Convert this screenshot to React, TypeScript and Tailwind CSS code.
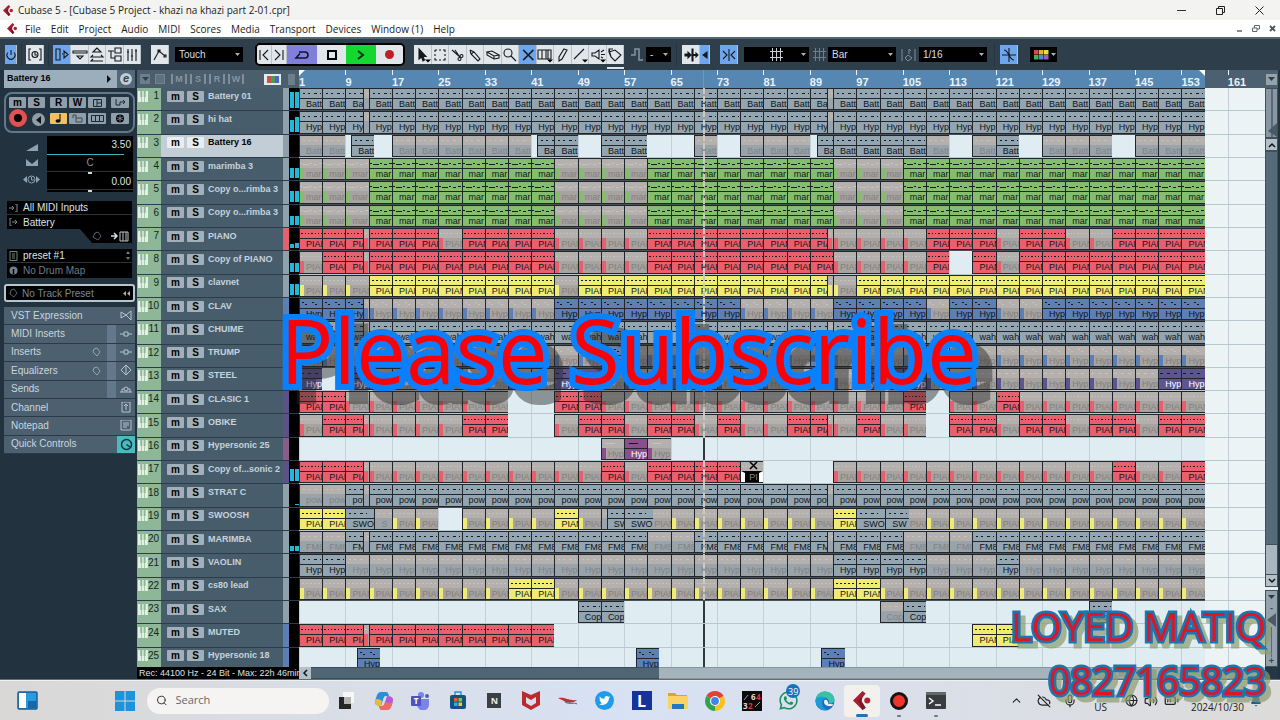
import type { ReactNode } from 'react';
import { ChevronUp, CloudOff, Mic, Volume2, BatteryMedium, Bell, Search, Globe } from 'lucide-react';
import { FaTwitter, FaWhatsapp } from 'react-icons/fa';

/* ---------- data ---------- */

type Tone = 'slate' | 'green' | 'red' | 'yellow' | 'blue' | 'violet' | 'plum';

interface Clip {
  start: number;
  len: number;
  on: boolean;
  label?: string;
  tone?: Tone;
  picked?: boolean;
}

interface Track {
  name: string;
  tone: Tone;
  label: string;
  /* one letter for each 4-bar block: a = playing, m = muted, s = split, '.' = empty */
  pattern: string;
  strip: string;
  meter: [number, number];
  extra?: Clip[];
}

const CELLS = 41.6;
const PLAYHEAD = 17.4;
const S = 'bg-[#8fa0ad]';
const B = 'bg-[#5c7fb5]';
const V = 'bg-[#5d5288]';

const tracks: Track[] = [
  { name: 'Battery 01', tone: 'slate', label: 'Batt', pattern: 'aasaaaaaaaaaaaaaaaaaaasaaaaaaaaaaaaaaaa', strip: S, meter: [16, 16] },
  { name: 'hi hat', tone: 'slate', label: 'Hyp', pattern: 'aasaaaaaaaaaaaaaaaaaaasaaaaaaaaaaaaaaaa', strip: S, meter: [12, 15] },
  {
    name: 'Battery 16', tone: 'slate', label: 'Batt', pattern: 'mm..mmmmmm.a.aa..m.mmm.aaaam.ma.mmm.mmm', strip: S, meter: [0, 0],
    extra: [
      { start: 2.25, len: 1, on: true },
      { start: 10.25, len: 0.75, on: true },
      { start: 22.3, len: 0.7, on: true },
    ],
  },
  { name: 'marimba 3', tone: 'green', label: 'mar', pattern: 'mmmaaaaaaaammmmaaaaaaaammmaaaaaaaaaaaaa', strip: S, meter: [10, 10] },
  { name: 'Copy o...rimba 3', tone: 'green', label: 'mar', pattern: 'mmmaaaaaaaammmmaaaaaaaammmaaaaaaaaaaaaa', strip: S, meter: [11, 11] },
  { name: 'Copy o...rimba 3', tone: 'green', label: 'mar', pattern: 'mmmaaaaaaaammmmaaaaaaaammmaaaaaaaaaaaaa', strip: S, meter: [9, 9] },
  { name: 'PIANO', tone: 'red', label: 'PIAN', pattern: 'aasaaamaaaammmmaaaaaaasmmmmaaamaammaaaa', strip: 'bg-[#e8606d]', meter: [4, 5] },
  { name: 'Copy of PIANO', tone: 'red', label: 'PIAN', pattern: 'masaaaaaaaammmmaaaaaaaammmma.amaaaaaaaa', strip: S, meter: [9, 9] },
  { name: 'clavnet', tone: 'yellow', label: 'PIAN', pattern: 'mmmaaaaaaaamaaaaaaaaaasmaaaaaaaaaaaaaaa', strip: S, meter: [11, 11] },
  { name: 'CLAV', tone: 'blue', label: 'Hyp', pattern: 'aasmmmmmmmmaaaaaaaammmmaaaamaammaaaaaaa', strip: B, meter: [0, 0] },
  { name: 'CHUIME', tone: 'slate', label: 'wah', pattern: 'aasaaaaaaaaaaaaaaaaaaasaaaaaaaaaaaaaaaa', strip: B, meter: [0, 0] },
  { name: 'TRUMP', tone: 'blue', label: 'Hyp', pattern: 'mmmmmmmmmmmmmammmmmmmmmmmmmmmmmmmmmmmmm', strip: B, meter: [0, 0] },
  { name: 'STEEL', tone: 'violet', label: 'Hyp', pattern: 'a.ammmmmmmmaammmmmmmmmmmaaammmmmmmmmmaa', strip: V, meter: [0, 0] },
  { name: 'CLASIC 1', tone: 'red', label: 'PIAN', pattern: 'aammmmmmm..aammmmmmmmmmmmma.mmammmmmmmm', strip: V, meter: [0, 0] },
  { name: 'OBIKE', tone: 'red', label: 'PIAN', pattern: 'masmmmmaa..maamaamammasmamm.aamaamaamaa', strip: V, meter: [0, 0] },
  { name: 'Hypersonic 25', tone: 'plum', label: 'Hyp', pattern: '.............mam.......................', strip: 'bg-[#895c8c]', meter: [0, 0] },
  {
    name: 'Copy of...sonic 2', tone: 'red', label: 'PIAN', pattern: 'aasmmmmmmmmmmamaaaa....mmmmmmmmmmmmamma', strip: V, meter: [12, 12],
    extra: [{ start: 19, len: 1, on: false, picked: true }],
  },
  { name: 'STRAT C', tone: 'slate', label: 'pow', pattern: 'mmsaaaaaaaaaaaaaaaaaaasaaaaaaaaaaaaaaaa', strip: S, meter: [0, 1] },
  {
    name: 'SWOOSH', tone: 'yellow', label: 'PIAN', pattern: 'aa..mm.mmmmam..mmmmmmmma..mmmmmmmmmmmmm', strip: S, meter: [0, 0],
    extra: [
      { start: 2, len: 1.25, on: true, label: 'SWO', tone: 'slate' },
      { start: 3.25, len: 0.75, on: false, label: 'S', tone: 'slate' },
      { start: 13, len: 0.25, on: false, label: '', tone: 'slate' },
      { start: 13.25, len: 0.75, on: true, label: 'SW', tone: 'slate' },
      { start: 14, len: 1.25, on: true, label: 'SWO', tone: 'slate' },
      { start: 24, len: 1.25, on: true, label: 'SWO', tone: 'slate' },
      { start: 25.25, len: 1, on: true, label: 'SW', tone: 'slate' },
    ],
  },
  { name: 'MARIMBA', tone: 'slate', label: 'FM8', pattern: 'mmsaaaaaaaaaaaammaaaaasaaammmaaaaaaaaaa', strip: S, meter: [5, 5] },
  { name: 'VAOLIN', tone: 'slate', label: 'Hyp', pattern: 'aammmmmmmmmmmmmmmmmmmmmaaaammmammmmmmmm', strip: S, meter: [0, 0] },
  { name: 'cs80 lead', tone: 'yellow', label: 'PIAN', pattern: 'mmmmmmmmmaammmmmmmmmmmmaammmmmmmmmmmmmm', strip: S, meter: [0, 0] },
  { name: 'SAX', tone: 'slate', label: 'Cop', pattern: '............aa...........ma.......a....', strip: S, meter: [0, 0] },
  {
    name: 'MUTED', tone: 'red', label: 'PIAN', pattern: 'aasaaaaaaaa............................', strip: B, meter: [0, 0],
    extra: [
      { start: 29, len: 1, on: true, tone: 'yellow' },
      { start: 30, len: 1, on: true, tone: 'yellow' },
    ],
  },
  {
    name: 'Hypersonic 18', tone: 'blue', label: 'Hyp', pattern: '', strip: B, meter: [0, 0],
    extra: [
      { start: 2.5, len: 1, on: true },
      { start: 14.5, len: 1, on: true },
      { start: 22.5, len: 1, on: true },
    ],
  },
];

const fills: Record<Tone, string> = {
  slate: 'bg-[#93a5b1]',
  green: 'bg-[#84bd6e]',
  red: 'bg-[#e8606d]',
  yellow: 'bg-[#f0ec72]',
  blue: 'bg-[#5c7fb5]',
  violet: 'bg-[#5d5590]',
  plum: 'bg-[#8c4f8e]',
};

const noteLines: Record<Tone, string> = {
  slate: 'M3 4.5H5M8 4.5H10M14 4.5H17M20 4.5H21',
  green: 'M0 4.500H2M3 5.500H9M10 4.500H12M14 5.500H17M19 4.500H22',
  red: 'M1 4.500H3M5 4.500H6M8 4.500H9M11 4.500H13M15 4.500H16M18 4.500H19M21 4.500H22',
  yellow: 'M2 4.500H4M6 4.500H8M10 4.500H12M14 4.500H16M18 4.500H20',
  blue: 'M2 3.500H4M5 5.500H7M12 3.500H14M15 5.500H17',
  violet: 'M1 4.500H4M8 4.500H11M15 4.500H18',
  plum: 'M4 4.500H13',
};

function buildClips(t: Track): Clip[] {
  const out: Clip[] = [];
  t.pattern.split('').forEach((c, i) => {
    if (c === 'a') out.push({ start: i, len: 1, on: true });
    if (c === 'm') out.push({ start: i, len: 1, on: false });
    if (c === 's') {
      out.push({ start: i, len: 0.75, on: true });
      out.push({ start: i + 0.75, len: 0.25, on: false, label: '' });
    }
  });
  return out.concat(t.extra ?? []);
}

const pct = (v: number) => `${(v / CELLS) * 100}%`;

/* ---------- timeline ---------- */

function ClipBox({ clip, track }: { clip: Clip; track: Track }) {
  const tone = clip.tone ?? track.tone;
  const label = clip.label ?? track.label;
  const light = tone === 'violet' || tone === 'plum';
  return (
    <div
      className="absolute top-0 bottom-0 flex flex-col overflow-hidden border-y border-l border-[#20262b]"
      style={{ left: pct(clip.start), width: pct(clip.len) }}
    >
      <div className={`h-[9px] shrink-0 overflow-hidden ${clip.on ? fills[tone] : 'bg-[#b3b0ae]'}`}>
        <svg width="23" height="9" className="block">
          <path d={noteLines[tone]} stroke={clip.on ? '#15191c' : '#c6c4c2'} />
        </svg>
      </div>
      {clip.on ? (
        <div className={`min-h-0 flex-1 overflow-hidden border-t border-[#20262b] pl-[6px] text-[9px] leading-[11px] whitespace-nowrap ${fills[tone]} ${light ? 'text-white' : 'text-[#101418]'}`}>
          {label}
        </div>
      ) : clip.picked ? (
        <div className="min-h-0 flex-1 overflow-hidden border-x-4 border-t-2 border-x-white border-t-black bg-black pl-1 text-[9px] leading-[9px] text-[#8a8a8a]">PI</div>
      ) : (
        <div className={`flex min-h-0 flex-1 overflow-hidden text-[9px] leading-[12px] whitespace-nowrap ${tone === 'slate' ? 'bg-[#9aa3a9] text-[#7f8487]' : fills[tone]}`}>
          <span className={`ml-[4px] min-w-0 flex-1 overflow-hidden pl-0.5 ${tone === 'slate' ? '' : 'bg-[#a6a3a1] text-[#84807d]'}`}>{label}</span>
        </div>
      )}
    </div>
  );
}

function Ruler() {
  const marks = Array.from({ length: 21 }, (_, i) => i);
  return (
    <div className="relative h-[18px] shrink-0 overflow-hidden bg-[#4d606f]">
      <div className="absolute inset-y-0 left-0 bg-[#5686b2]" style={{ width: pct(39) }} />
      <svg className="absolute top-0 left-0" width="6" height="6"><path d="M0 0H6L0 6z" fill="#fff" /></svg>
      <div className="absolute top-0" style={{ left: pct(38.75) }}>
        <svg width="6" height="6" className="block"><path d="M0 0H6V6z" fill="#fff" /></svg>
      </div>
      {marks.map((i) => (
        <div key={i} className="absolute inset-y-0" style={{ left: pct(i * 2) }}>
          <div className="h-[5px] w-px bg-white/90" />
          <div className="text-[11px] leading-[14px] font-bold text-[#eaf3fa]">{i * 8 + 1}</div>
        </div>
      ))}
      <div className="absolute inset-y-0 w-px bg-[#9a8f7c]" style={{ left: pct(PLAYHEAD) }} />
    </div>
  );
}

function Timeline() {
  const lines = Array.from({ length: 21 }, (_, i) => i);
  return (
    <section aria-label="Arrangement" className="flex min-w-0 flex-1 flex-col">
      <Ruler />
      <div className="relative min-h-0 flex-1 overflow-hidden bg-[#ecf3f5]">
        <div className="absolute inset-y-0 left-0 bg-[#dfecf2]" style={{ width: pct(39) }} />
        {lines.map((i) => (
          <div key={i} className="absolute inset-y-0 w-px bg-[#c3d0d8]" style={{ left: pct(i * 2) }} />
        ))}
        <div className="absolute inset-y-0 w-0.5 bg-[#30383e]" style={{ left: pct(PLAYHEAD) }} />
        <div className="grid h-[583px] grid-rows-[repeat(25,minmax(0,1fr))]">
          {tracks.map((t, i) => {
            const crossed = /[ams]/.test(t.pattern.charAt(Math.floor(PLAYHEAD)));
            return (
              <div key={i} className="relative border-b border-[#b9c7cf]">
                {/^[^.]+$/.test(t.pattern) && (
                  <div className="absolute top-0 -bottom-px left-0 bg-[#4a5257]" style={{ width: pct(39) }} />
                )}
                {buildClips(t).map((c, k) => (
                  <ClipBox key={k} clip={c} track={t} />
                ))}
                {crossed && (
                  <div className="absolute inset-y-0 w-0 border-l-2 border-dashed border-[#cdc8c0]" style={{ left: pct(PLAYHEAD) }} />
                )}
              </div>
            );
          })}
        </div>
        <svg className="absolute top-[373px]" style={{ left: pct(19.4) }} width="10" height="9" viewBox="0 0 10 9">
          <path d="M1 1L8 8M8 1L1 8" stroke="#000" strokeWidth="1.6" />
        </svg>
      </div>
      <div className="flex h-3 shrink-0 bg-[#a5b3bc]">
        <button aria-label="Scroll left" className="flex w-3 items-center justify-center bg-[#b4c0c8]">
          <svg width="6" height="8"><path d="M5 1L2 4L5 7" stroke="#111" strokeWidth="1.5" fill="none" /></svg>
        </button>
        <div className="w-[36%] border-y border-[#3c4d59] bg-[#4f6573]" />
        <div className="flex-1 border-y border-[#8795a0]" />
        <button aria-label="Scroll right" className="flex w-3 items-center justify-center bg-[#b4c0c8]">
          <svg width="6" height="8"><path d="M1 1L4 4L1 7" stroke="#111" strokeWidth="1.5" fill="none" /></svg>
        </button>
      </div>
    </section>
  );
}

function RightRail() {
  return (
    <div className="flex w-[13px] shrink-0 flex-col bg-[#a9b6bf]">
      <div className="flex h-[18px] shrink-0 items-center justify-center bg-[#4d606f]">
        <button aria-label="Ruler options" className="flex size-[11px] items-center justify-center bg-[#94a2ac]">
          <svg width="7" height="5"><path d="M0 0H7L3.500 4z" fill="#2e3c47" /></svg>
        </button>
      </div>
      <div className="relative flex h-[50px] shrink-0 justify-center border border-[#3f4f5b] bg-[#8797a3]">
        <div className="w-0.5 bg-[#5a6975]" />
        <svg className="absolute bottom-0 left-0.5" width="9" height="14"><path d="M9 0V14L0 8z" fill="#4d5a64" /></svg>
      </div>
      <button aria-label="Scroll up" className="flex h-[13px] shrink-0 items-center justify-center border border-[#3f4f5b] bg-[#b4c0c8]">
        <svg width="8" height="6"><path d="M1 5L4 2L7 5" stroke="#111" strokeWidth="1.5" fill="none" /></svg>
      </button>
      <div className="flex-1 border border-[#3f4f5b] bg-[#566b7a]" />
      <div className="h-[29px] shrink-0 border-x border-[#3f4f5b]" />
      <button aria-label="Scroll down" className="flex h-[13px] shrink-0 items-center justify-center border border-[#3f4f5b] bg-[#b4c0c8]">
        <svg width="8" height="6"><path d="M1 1L4 4L7 1" stroke="#111" strokeWidth="1.5" fill="none" /></svg>
      </button>
      <div className="h-[3px] shrink-0 bg-[#e6edf0]" />
      <div className="flex h-[77px] shrink-0 flex-col items-center border border-[#3f4f5b] bg-[#94a3ae] text-[9px] leading-[9px] font-bold text-[#35434e]">
        <svg className="mt-1" width="7" height="5"><path d="M0 0H7L3.500 4z" fill="#2e3c47" /></svg>
        <span className="mt-1">-</span>
        <svg width="9" height="14"><path d="M9 0V14L0 7z" fill="#4d5a64" /></svg>
        <div className="w-px flex-1 bg-[#5a6975]" />
        <span>+</span>
      </div>
      <div className="h-3 shrink-0 bg-[#263744]" />
    </div>
  );
}

/* ---------- track list ---------- */

function Keys() {
  return (
    <svg width="10" height="11" viewBox="0 0 10 11" aria-hidden="true">
      <path d="M0 0H3V11H0zM3.700 0H6.300V11H3.700zM7 0H10V11H7z" fill="#e2f1e4" />
      <path d="M2.300 0H4.300V6H2.300zM5.700 0H7.700V6H5.700z" fill="#8db796" />
    </svg>
  );
}

function MuteSolo({ active }: { active?: boolean }) {
  const cls = `h-[11px] w-[17px] rounded-[1px] text-[10px] leading-[11px] font-black text-black ${active ? 'bg-[#e9edf0]' : 'bg-[#a3b0ba]'}`;
  return (
    <>
      <button aria-label="Mute" className={cls}>m</button>
      <button aria-label="Solo" className={cls}>S</button>
    </>
  );
}

function TrackList() {
  return (
    <section aria-label="Tracks" className="flex w-[162px] shrink-0 flex-col bg-black">
      <div className="flex h-[18px] shrink-0 items-center gap-[3px] bg-[#4b5e6c] pr-1 pl-[3px]">
        <button aria-label="Track menu" className="flex h-[10px] w-[10px] items-center justify-center bg-[#6c7e8b]">
          <svg width="7" height="4"><path d="M0 0H7L3.500 4z" fill="#2f3f4b" /></svg>
        </button>
        <button aria-label="Add track" className="ml-0.5 size-[10px] border border-[#74858f] bg-[#5f717e]" />
        <div className="ml-[3px] flex gap-[3px]">
          {['M', 'S', 'R', 'W'].map((k) => (
            <button key={k} aria-label={`All ${k}`} className="h-[10px] w-4 border-x-2 border-[#7e8f9b] text-[9px] leading-[10px] font-bold text-[#8496a2]">{k}</button>
          ))}
        </div>
        <button aria-label="Track colours" className="ml-auto flex h-[11px] w-[17px] items-center justify-center bg-[#e4e9ec]">
          <i className="h-[7px] w-1 bg-[#ca5248]" /><i className="h-[7px] w-1 bg-[#4a9c5e]" /><i className="h-[7px] w-1 bg-[#4a67c8]" />
        </button>
        <button aria-label="Divide list" className="ml-1 h-[11px] w-[7px] bg-[#6c7e8b]" />
      </div>
      <div className="min-h-0 flex-1 overflow-hidden">
        <ul className="grid h-[583px] grid-rows-[repeat(25,minmax(0,1fr))]">
          {tracks.map((t, i) => {
            const active = i === 2;
            return (
              <li key={i} className="flex min-h-0 border-b border-[#2c3d49]">
                <div className="flex w-6 items-center justify-between bg-[#8db796] pr-0.5 pb-1.5 pl-px text-[10px] leading-none text-[#15251a]">
                  <Keys />
                  {i + 1}
                </div>
                <div className={`flex min-w-0 flex-1 items-center gap-[3px] pb-1.5 pl-1.5 ${active ? 'bg-[#c3cdd5]' : 'bg-[#485d6c]'}`}>
                  <MuteSolo active={active} />
                  <span className={`ml-px text-[9px] leading-none font-bold whitespace-nowrap ${active ? 'text-black' : 'text-[#c6d2db]'}`}>{t.name}</span>
                </div>
                <div className={`w-[6px] ${t.strip}`} />
                <div className="flex w-[10px] items-end gap-px bg-black pb-0.5 pl-px">
                  <div className="w-1 bg-[#1fb9dc]" style={{ height: t.meter[0] }} />
                  <div className="w-1 bg-[#1fb9dc]" style={{ height: t.meter[1] }} />
                </div>
              </li>
            );
          })}
        </ul>
      </div>
      <div className="h-3 shrink-0 overflow-hidden bg-black pl-0.5 text-[9px] leading-3 whitespace-nowrap text-[#dde3e8]">
        Rec: 44100 Hz - 24 Bit - Max: 22h 46min
      </div>
    </section>
  );
}

/* ---------- inspector ---------- */

function SmallKey({ children, label, gold, wide }: { children: ReactNode; label: string; gold?: boolean; wide?: boolean }) {
  return (
    <button
      aria-label={label}
      className={`flex h-[11px] items-center justify-center rounded-[1px] text-[10px] leading-none font-black text-black ${wide ? 'w-[18px]' : 'w-[17px]'} ${gold ? 'bg-[#f2c063]' : 'bg-[#8e9eaa]'}`}
    >
      {children}
    </button>
  );
}

function Inspector() {
  const sections: [string, string, boolean][] = [
    ['VST Expression', 'M1 2V8L6 5zM11 1V10L6 5z', false],
    ['MIDI Inserts', 'M0 5H4M8 5H12M4 3H8V7H4z', false],
    ['Inserts', 'M0 5H4M8 5H12M4 3H8V7H4z', true],
    ['Equalizers', 'M1 5L6 0L11 5L6 10zM6 0V10', true],
    ['Sends', 'M0 8H12M2 8V5H4M10 8V5H8M4 5A2 2 0 1 0 8 5A2 2 0 1 0 4 5', false],
    ['Channel', 'M2 0H10V10H2zM6 8V2M4 4L6 2L8 4', false],
    ['Notepad', 'M1 0H11V10H1zM3 3H9M3 5H9M3 7H7', false],
    ['Quick Controls', '', false],
  ];
  return (
    <aside aria-label="Inspector" className="flex w-[133px] shrink-0 flex-col bg-[#22333f] pr-0.5 text-[10px] text-[#dbe4ea]">
      <div className="flex h-[18px] items-center bg-[#9caebb] text-black">
        <span className="flex-1 pl-[3px] text-[9px] font-bold">Battery 16</span>
        <svg width="4" height="8"><path d="M0 0L4 4L0 8z" fill="#111" /></svg>
        <button aria-label="Edit channel" className="ml-[6px] flex h-[18px] w-[18px] items-center justify-center bg-[#536878]">
          <span className="size-3 rounded-full bg-[#c1ccd4] text-center text-[11px] leading-[10px] font-bold text-[#34434f] italic">e</span>
        </button>
      </div>

      <div className="mt-[4px] rounded-lg border-2 border-[#61788a] px-[3px] pt-[3px] pb-1">
        <div className="flex gap-0.5">
          <SmallKey label="Mute">m</SmallKey>
          <SmallKey label="Solo">S</SmallKey>
          <span className="w-px" />
          <SmallKey label="Read">R</SmallKey>
          <SmallKey label="Write">W</SmallKey>
          <SmallKey label="Editor" wide><svg width="9" height="8"><path d="M.5 .5H8.500V7.500H.5zM4 .5V7.500M4 4H8" stroke="#1c2830" fill="none" /></svg></SmallKey>
          <span className="w-px" />
          <SmallKey label="Input transformer" wide><svg width="11" height="8"><path d="M1 0V6H5V3H10M8 1L10 3L8 5" stroke="#1c2830" fill="none" /></svg></SmallKey>
        </div>
        <div className="mt-[5px] flex gap-0.5">
          <span className="flex w-[17px] items-start">
            <button aria-label="Record enable" className="-mt-1 size-[18px] shrink-0 rounded-full border-[5px] border-[#e2504f] bg-black" />
          </span>
          <button aria-label="Monitor" className="ml-1 flex size-[13px] items-center justify-center rounded-full bg-[#8e9eaa]">
            <svg width="6" height="8"><path d="M5 0V8L0 4z" fill="#111" /></svg>
          </button>
          <span className="w-px" />
          <SmallKey label="Timebase" gold><svg width="8" height="9"><ellipse cx="3" cy="7" rx="2.500" ry="1.700" /><path d="M5 7V0" stroke="#000" /></svg></SmallKey>
          <SmallKey label="Lock"><svg width="11" height="9"><path d="M1 4V1H4V4H10V8H4V4" stroke="#3d4b55" fill="none" /></svg></SmallKey>
          <SmallKey label="Lanes" wide><svg width="13" height="7"><path d="M.5 .5H12.500V6.500H.5zM4.500 .5V6.500M8.500 .5V6.500" stroke="#1c2830" fill="none" /></svg></SmallKey>
          <span className="w-px" />
          <SmallKey label="Freeze" wide><svg width="10" height="9" viewBox="0 0 10 9"><circle cx="5" cy="4.500" r="4" /><path d="M5 1V8M2 3L8 6M8 3L2 6" stroke="#8e9eaa" strokeWidth=".8" /></svg></SmallKey>
        </div>
      </div>

      <div className="mt-[3px] flex">
        <div className="flex w-[43px] flex-col items-center justify-around py-1 pl-3">
          <svg width="12" height="7"><path d="M0 7L12 0V7z" fill="#8fa1b0" /></svg>
          <svg width="12" height="7"><path d="M0 0L6 5L12 0V7H0z" fill="#8fa1b0" /></svg>
          <svg width="17" height="9"><path d="M0 4.500L4 1V8zM17 4.500L13 1V8z" fill="#8fa1b0" /><circle cx="8.500" cy="4.500" r="3.500" stroke="#8fa1b0" fill="none" /><path d="M8.500 2V5H11" stroke="#8fa1b0" fill="none" /></svg>
        </div>
        <div className="mr-0.5 flex-1 bg-black text-right text-[10px]">
          <div className="h-[18px] pt-px pr-0.5 leading-4">3.50</div>
          <div className="h-px w-[90%] bg-[#3fb5b9]" />
          <div className="h-4 text-center leading-4 text-[#8b969e]">C</div>
          <div className="flex justify-center border-t border-[#333]"><i className="h-0.5 w-1 bg-[#c8dce6]" /></div>
          <div className="h-[15px] pr-0.5 leading-[15px]">0.00</div>
          <div className="flex justify-center border-t border-[#333]"><i className="h-0.5 w-1 bg-[#c8dce6]" /></div>
        </div>
      </div>

      <div className="mx-[3px] mt-[9px] bg-black">
        <div className="flex h-[14px] items-center gap-[5px] border-b border-[#2c3338] pl-0.5">
          <svg width="9" height="8"><path d="M0 4H5M3 2L5 4L3 6M6 0H8V8H6" stroke="#7d8a94" fill="none" /></svg>All MIDI Inputs
        </div>
        <div className="flex h-[14px] items-center gap-[5px] pl-0.5">
          <svg width="9" height="8"><path d="M3 0H1V8H3M3 4H8M6 2L8 4L6 6" stroke="#7d8a94" fill="none" /></svg>Battery
        </div>
      </div>
      <div className="mr-[3px] flex justify-end">
        <svg width="52" height="14"><path d="M0 0H52V14H12z" fill="#000" /><path d="M15 4L18 3L21 7L18 11L13 8z" stroke="#56626b" fill="none" /><path d="M31 7H36M34 4L37 7L34 10" stroke="#d5dde2" strokeWidth="1.500" fill="none" /><path d="M40 3H48V12H40zM43 3V12M46 3V12" stroke="#b9c4cc" fill="none" /></svg>
      </div>
      <div className="mx-[3px] mt-[6px] bg-black">
        <div className="flex h-[14px] items-center gap-[5px] border-b border-[#2c3338] pr-0.5 pl-0.5">
          <svg width="9" height="10"><path d="M1 .5H8V9.500H1zM3 3H6M3 5H6M3 7H6" stroke="#6e8577" fill="none" /></svg>
          <span className="flex-1">preset #1</span>
          <svg width="4" height="9"><path d="M0 3L2 0L4 3zM0 6L2 9L4 6z" fill="#6f7a82" /></svg>
        </div>
        <div className="flex h-[15px] items-center gap-[5px] pl-0.5 text-[#707c84]">
          <svg width="9" height="9"><circle cx="4.500" cy="4.500" r="4" fill="#71808a" /><path d="M4.500 3V8" stroke="#000" strokeWidth="1.500" /></svg>No Drum Map
        </div>
      </div>
      <div className="mt-[6px] flex h-[18px] items-center gap-1 rounded-[3px] border-2 border-[#b5c6d0] bg-black px-[3px] text-[#7b878f]">
        <svg width="9" height="10"><path d="M2 2L5 1L8 5L5 9L1 6z" stroke="#56626b" fill="none" /></svg>
        <span className="flex-1">No Track Preset</span>
        <svg width="7" height="5"><path d="M3 0V5L0 2.500zM7 0V5L4 2.500z" fill="#a5b0b8" /></svg>
      </div>

      <ul className="mt-[5px] grid h-[147px] grid-rows-[repeat(8,minmax(0,1fr))]">
        {sections.map(([name, d, bypass], i) => (
          <li key={name} className="flex items-stretch border-b border-[#2a3b47] bg-[#4c6070]">
            <button className="flex-1 pl-[7px] text-left leading-none text-[#c9d6df]">{name}</button>
            {bypass && (
              <svg className="mr-1.5 self-center" width="9" height="10"><path d="M2 2L5 1L8 5L5 9L1 5z" stroke="#8fa3b1" fill="none" /></svg>
            )}
            {i > 0 && i < 5 && <span className="mr-px w-[9px] bg-[#63788a]" />}
            <span className={`flex w-[18px] items-center justify-center ${i === 7 ? 'bg-[#4bb9bd]' : ''}`}>
              {i === 7 ? (
                <svg width="13" height="13"><circle cx="6.500" cy="6.500" r="5" stroke="#12333c" strokeWidth="1.500" fill="none" /><path d="M6.500 6.500L10 9" stroke="#12333c" strokeWidth="1.500" /></svg>
              ) : (
                <svg width="12" height="11"><path d={d} stroke="#b4c5d0" fill="none" /></svg>
              )}
            </span>
          </li>
        ))}
      </ul>
    </aside>
  );
}

/* ---------- toolbar ---------- */

function Tool({ d, label, tone, w, menu, fill }: { d: string; label: string; tone?: 'blue'; w?: string; menu?: boolean; fill?: boolean }) {
  return (
    <button aria-label={label} className={`flex h-[19px] items-center justify-center border-r border-[#b9c2c9] ${w ?? 'w-[17px]'} ${tone === 'blue' ? 'bg-[#6ea6ee]' : 'bg-[#e1e6ea]'}`}>
      <svg width="16" height="16" viewBox="0 0 16 16" className="shrink-0">
        <path d={d} stroke="#15191d" strokeWidth="1.100" fill={fill ? '#15191d' : 'none'} />
        {menu && <path d="M10 12.500H16L13 15.500z" fill="#000" />}
      </svg>
    </button>
  );
}

function Pick({ label, value, w }: { label: string; value: string; w: string }) {
  return (
    <div className={`relative flex h-[15px] items-center bg-black ${w}`}>
      <select aria-label={label} defaultValue={value} className="h-full w-full appearance-none bg-transparent pl-1 text-[10px] leading-none text-[#d9dfe4] outline-none">
        <option>{value}</option>
      </select>
      <svg className="pointer-events-none absolute right-[3px]" width="5" height="3"><path d="M0 0H5L2.500 3z" fill="#aab3ba" /></svg>
    </div>
  );
}

const Divider = () => <span className="h-[22px] w-px bg-[#253440]" />;

function GridMark({ tint }: { tint: string }) {
  return (
    <svg width="13" height="13"><path d="M0 3.500H13M0 9.500H13M2.500 0V13M6.500 0V13M10.500 0V13" stroke={tint} fill="none" /></svg>
  );
}

function Toolbar() {
  return (
    <div role="toolbar" aria-label="Project tools" className="flex h-[33px] shrink-0 items-center border-t-2 border-[#55646f] bg-[#2e3e4b] pl-[5px]">
      <Tool label="Activate project" tone="blue" w="w-[12px]" d="M8 3V8M5 5.500A4 4 0 1 0 11 5.500" />
      <span className="w-1" /><Divider /><span className="w-1" />
      <Tool label="Delay compensation" w="w-[18px]" d="M4 2H2V13H4M12 2H14V13H12M5 7.500A3 3 0 1 0 11 7.500A3 3 0 1 0 5 7.500M8 5V8H10" />
      <span className="w-1" /><Divider /><span className="w-1" />
      <div className="flex">
        <Tool label="Show inspector" tone="blue" w="w-[18px]" d="M2 2H6V13H2zM8 7H9M10 4V11L14 7.500z" />
        <Tool label="Show info line" w="w-[18px]" d="M1 4H15V6H1zM5 9H11L8 12z" />
        <Tool label="Show overview" w="w-[17px]" d="M8 1L4 5H12zM4 8L2 10H14L12 8M4 12L2 14H14" />
        <Tool label="Open pool" w="w-[18px]" d="M1 4H7M4 4V11H8M8 1H14V6H8zM8 9H14V14H8z" />
        <Tool label="Open mixer" w="w-[17px]" d="M4 2V14M8 2V14M12 2V14M3 5H5M7 9H9M11 4H13" />
      </div>
      <span className="w-[10px]" />
      <Tool label="Automation" w="w-[18px]" d="M2 13L7 4L13 9M6 3H8V5H6zM12 8H14V10H12z" />
      <span className="w-[6px]" />
      <Pick label="Automation mode" value="Touch" w="w-[68px]" />
      <div className="ml-3 flex items-center overflow-hidden rounded-[5px] border-2 border-black">
        <Tool label="To start" w="w-[15px]" d="M4 3V13M12 3L7 8L12 13" />
        <Tool label="To end" w="w-[15px]" d="M4 3L9 8L4 13M12 3V13" />
        <button aria-label="Cycle" className="flex h-[19px] w-[30px] items-center justify-center bg-[#8080dc]">
          <svg width="18" height="12"><path d="M6 3H12A3 3 0 0 1 12 9H3L7 4.500" stroke="#15152a" strokeWidth="1.600" fill="none" /></svg>
        </button>
        <button aria-label="Stop" className="flex h-[19px] w-[29px] items-center justify-center bg-[#e1e6ea]"><i className="size-[10px] border-2 border-black" /></button>
        <button aria-label="Play" className="flex h-[19px] w-[30px] items-center justify-center bg-[#13d82f]">
          <svg width="8" height="10"><path d="M1 1L6 5L1 9" stroke="#0a3510" strokeWidth="2" fill="none" /></svg>
        </button>
        <button aria-label="Record" className="flex h-[19px] w-[27px] items-center justify-center bg-[#e1e6ea]"><i className="size-[9px] rounded-full bg-[#ba2026]" /></button>
      </div>
      <div className="ml-[9px] flex">
        <Tool label="Select" w="w-[18px]" menu fill d="M4 2V12L6.500 10L8 14L9.500 13L8 9.500H11z" />
        <Tool label="Range" w="w-[17px]" d="M3 3H5M7 3H9M11 3H13V5M13 7V9M13 11V13H11M9 13H7M5 13H3V11M3 9V7M3 5V3" />
        <Tool label="Split" w="w-[18px]" d="M2 3L10 10M5 3L9 9M10 9A1.500 1.500 0 1 0 13 9A1.500 1.500 0 1 0 10 9M8 12A1.500 1.500 0 1 0 11 12A1.500 1.500 0 1 0 8 12" />
        <Tool label="Glue" w="w-[17px]" d="M3 3L4 7L11 14L13 12L7 5L3 3M4 7L7 5" />
        <Tool label="Erase" w="w-[18px]" d="M2 5L7 4L14 8L9 9zM2 5V8L9 12L14 11V8M9 9V12" />
        <Tool label="Zoom" w="w-[17px]" d="M2 6A4 4 0 1 0 10 6A4 4 0 1 0 2 6M9 9L14 14" />
        <Tool label="Mute" tone="blue" w="w-[18px]" d="M3 3L13 13M13 3L3 13M3.500 3L13.500 13M13.500 3L3.500 13" />
        <Tool label="Time warp" w="w-[17px]" menu d="M1 3H14V12H1zM5 3V12M9 3V12M11 3V12" />
        <Tool label="Draw" w="w-[18px]" d="M9 2L12 3L7 12L4 14V10z" />
        <Tool label="Line" w="w-[17px]" menu d="M2 12L12 2" />
        <Tool label="Play" w="w-[18px]" menu d="M2 6H5L9 3V12L5 9H2zM11 5L14 3M11 7.500H15M11 10L13 11" />
        <span className="relative flex">
          <Tool label="Colour" w="w-[17px]" d="M2 5L8 3L14 8L8 14L4 10zM2 2L4 10M2 5V2H6" />
          <i className="absolute -bottom-[5px] left-0 h-0.5 w-full bg-[#dfe5e9]" />
        </span>
      </div>
      <svg className="ml-[7px]" width="12" height="13"><path d="M0 7H4V1H8V12H12" stroke="#8795a0" strokeWidth="1.500" fill="none" /></svg>
      <span className="w-[3px]" />
      <Pick label="Curve" value="-" w="w-[25px]" />
      <span className="w-[5px]" /><Divider /><span className="w-[5px]" />
      <Tool label="Auto-scroll" w="w-[18px]" fill d="M2 7H5V5L8 8L5 11V9H2zM9 2H10V14H9zM11 7.500H13V6L15 8L13 10V8.500H11z" />
      <Tool label="Suspend auto-scroll" tone="blue" w="w-[10px]" fill d="M10 5V11L6 8z" />
      <span className="w-[10px]" />
      <Tool label="Snap" tone="blue" w="w-[18px]" d="M8 2V14M2 4L6 8L2 12M14 4L10 8L14 12" />
      <div className="relative ml-[6px] flex items-center justify-center">
        <Pick label="Snap type" value=" " w="w-[65px]" />
        <span className="pointer-events-none absolute"><GridMark tint="#c8d0d6" /></span>
      </div>
      <span className="w-1" />
      <GridMark tint="#6f7e89" />
      <span className="w-[2px]" />
      <Pick label="Grid type" value="Bar" w="w-[68px]" />
      <svg className="ml-[5px]" width="15" height="14"><path d="M1 1V13M14 1V13M8 1V6M8 1L10 3M4 10L7 7L11 10L7 13z" stroke="#7e8c97" fill="none" /></svg>
      <span className="w-[3px]" />
      <Pick label="Quantize" value="1/16" w="w-[68px]" />
      <span className="w-[7px]" /><Divider /><span className="w-[5px]" />
      <Tool label="Snap to zero crossing" tone="blue" w="w-[18px]" d="M1 8H15M8 1V15M3 3C8 3 8 13 13 13" />
      <button aria-label="Colour menu" className="ml-3 flex h-[15px] w-[27px] items-center gap-0.5 bg-black pl-1">
        <svg width="15" height="10"><path d="M0 0H4.500V4.500H0z" fill="#d64b3f" /><path d="M5 0H9.500V4.500H5z" fill="#e2b13c" /><path d="M10 0H14.500V4.500H10z" fill="#dfe04a" /><path d="M0 5H4.500V9.500H0z" fill="#3fb45a" /><path d="M5 5H9.500V9.500H5z" fill="#4b8bd8" /><path d="M10 5H14.500V9.500H10z" fill="#a45bc4" /></svg>
        <svg width="5" height="3"><path d="M0 0H5L2.500 3z" fill="#aab3ba" /></svg>
      </button>
    </div>
  );
}

/* ---------- window chrome ---------- */

function Logo({ size }: { size: number }) {
  return (
    <svg width={size} height={size} viewBox="0 0 12 12" aria-hidden="true">
      <path d="M6 0L0 6L6 12L8 10.500L4.500 6L8 1.500z" fill="#a51f33" />
      <path d="M6 3.500L3.500 6L6 12L8 10.500L5.500 6.500z" fill="#741a2b" />
      <circle cx="9" cy="6" r="1.900" fill="#b3202f" />
    </svg>
  );
}

function Chrome() {
  const menus = ['File', 'Edit', 'Project', 'Audio', 'MIDI', 'Scores', 'Media', 'Transport', 'Devices', 'Window (1)', 'Help'];
  return (
    <header className="shrink-0 font-['Open_Sans','Noto_Sans',sans-serif] text-[#1b1b1b]">
      <div className="flex h-5 items-center bg-[#f3f3f1] pl-[3px]">
        <Logo size={11} />
        <h1 className="ml-1 flex-1 text-[10px] leading-5">Cubase 5 - [Cubase 5 Project - khazi na khazi part 2-01.cpr]</h1>
        <div className="flex items-center gap-[30px] pr-4">
          <button aria-label="Minimize"><svg width="9" height="9"><path d="M0 4.500H9" stroke="#333" /></svg></button>
          <button aria-label="Restore"><svg width="9" height="9"><path d="M.5 2.500H6.500V8.500H.5zM2.500 2V.5H8.500V6.500H7" stroke="#222" fill="none" /></svg></button>
          <button aria-label="Close"><svg width="9" height="9"><path d="M.5 .5L8.500 8.500M8.500 .5L.5 8.500" stroke="#222" /></svg></button>
        </div>
      </div>
      <nav className="flex h-[17px] items-center bg-white pl-[7px] text-[10px] leading-none">
        <Logo size={11} />
        <div className="ml-[7px] flex flex-1 gap-[10px]">
          {menus.map((m) => (
            <button key={m} className="whitespace-nowrap">{m}</button>
          ))}
        </div>
        <div className="flex items-center gap-[9px] pr-1 text-[#5d6975]">
          <button aria-label="Minimize project"><svg width="6" height="7"><path d="M0 6H5" stroke="#5d6975" strokeWidth="1.500" /></svg></button>
          <button aria-label="Restore project"><svg width="8" height="7"><path d="M.5 3H5V6.500H.5zM2.500 3V.5H7.500V4H5" stroke="#5d6975" fill="none" /></svg></button>
          <button aria-label="Close project"><svg width="7" height="7"><path d="M1 1L6 6M6 1L1 6" stroke="#4b5661" strokeWidth="1.800" /></svg></button>
        </div>
      </nav>
    </header>
  );
}

/* ---------- taskbar ---------- */

function AppIcon({ id }: { id: string }) {
  switch (id) {
    case 'Task view':
      return <svg width="18" height="18"><path d="M5 0H16V11H5z" fill="#f7f7f5" /><path d="M1 5H6V12H13V17H1z" fill="#262626" /><path d="M6 5H13V12H6z" fill="#b7b5b2" /></svg>;
    case 'Copilot':
      return (
        <svg width="20" height="20" viewBox="0 0 20 20">
          <path d="M7 1H12C14 1 14.500 3 15 5H12C10 5 9.500 7 9 9L7 15C4 15 0 14 1 10L3 4C4 2 5 1 7 1z" fill="#2b8fd9" />
          <path d="M1 9C3 7 6 8 8 10L7 15C4 15.500 0 14 1 9z" fill="#e9b83c" />
          <path d="M13 19H8C6 19 5.500 17 5 15H8C10 15 10.500 13 11 11L13 5C16 5 20 6 19 10L17 16C16 18 15 19 13 19z" fill="#b45ad6" />
          <path d="M19 11C17 13 14 12 11 11C10.500 13 10 15 8 15H5C5.500 17 6 19 8 19H13C16 19 17 16 19 11z" fill="#ee6c62" />
        </svg>
      );
    case 'Teams':
      return <svg width="19" height="19"><circle cx="10" cy="4" r="3" fill="#7b83eb" /><circle cx="16" cy="5" r="2" fill="#5059c9" /><path d="M6 8H18V13A5 5 0 0 1 6 14z" fill="#7b83eb" /><rect x="0" y="5" width="10" height="10" rx="1" fill="#4b53bc" /><text x="5" y="13" textAnchor="middle" fontSize="8" fontWeight="700" fill="#fff">T</text></svg>;
    case 'Store':
      return <svg width="18" height="19"><path d="M6 4V1H12V4" stroke="#2b93d8" strokeWidth="1.500" fill="none" /><rect x="1" y="4" width="16" height="14" rx="2" fill="#15507f" /><path d="M5 7H8.500V10.500H5z" fill="#ee5a35" /><path d="M9.500 7H13V10.500H9.500z" fill="#86c440" /><path d="M5 11.500H8.500V15H5z" fill="#35a8e8" /><path d="M9.500 11.500H13V15H9.500z" fill="#fcc52c" /></svg>;
    case 'Notes':
      return <span className="flex h-[15px] w-[14px] items-center justify-center bg-[#393f45] text-[9px] font-bold text-[#e8e8e8]">N</span>;
    case 'McAfee':
      return <svg width="18" height="19"><path d="M0 0L9 4L18 0V14L9 19L0 14zM4 6V12L9 15L14 12V6L9 9z" fill="#bb2a31" fillRule="evenodd" /></svg>;
    case 'Swoosh':
      return <svg width="20" height="8"><path d="M0 1C8 0 10 4 19 3C14 7 8 6 6 4z" fill="#c03136" /><path d="M7 5C12 8 16 5 19 7" stroke="#46619c" fill="none" /></svg>;
    case 'Twitter':
      return <span className="flex size-[19px] items-center justify-center rounded-full bg-[#1f9bea]"><FaTwitter size={11} color="#fff" /></span>;
    case 'L':
      return <span className="flex h-[19px] w-5 items-center justify-center bg-[#16339a] text-[16px] font-bold text-white">L</span>;
    case 'Explorer':
      return <svg width="20" height="18"><path d="M0 1H7L9 3H19V6H0z" fill="#e0a32b" /><path d="M0 4H20V17H0z" fill="#fbd365" /><path d="M4 12H16V17H4z" fill="#2377bd" /></svg>;
    case 'Chrome':
      return <svg width="20" height="20" viewBox="0 0 20 20"><path d="M10 10L1.340 5A10 10 0 0 1 18.660 5z" fill="#e34133" /><path d="M10 10L18.660 5A10 10 0 0 1 10 20z" fill="#fbc116" /><path d="M10 10L10 20A10 10 0 0 1 1.340 5z" fill="#31a350" /><circle cx="10" cy="10" r="5" fill="#fff" /><circle cx="10" cy="10" r="3.900" fill="#4083ee" /></svg>;
    case '6432':
      return <svg width="20" height="20"><rect width="20" height="20" fill="#0b0b0b" /><text x="9" y="9" fontSize="8" fontWeight="700" fill="#ddd">6</text><text x="14" y="9" fontSize="8" fontWeight="700" fill="#e03a32">4</text><text x="1" y="18" fontSize="8" fontWeight="700" fill="#ddd">3</text><text x="6" y="18" fontSize="8" fontWeight="700" fill="#e03a32">2</text><path d="M2 9L6 4M13 16L18 11" stroke="#999" /></svg>;
    case 'WhatsApp':
      return (
        <span className="relative flex">
          <FaWhatsapp size={21} color="#1d8f5b" />
          <span className="absolute -top-[6px] left-2 flex h-[14px] min-w-[14px] items-center justify-center rounded-full bg-[#1473bd] px-[2px] text-[9px] leading-none text-white">39</span>
        </span>
      );
    case 'Edge':
      return (
        <svg width="20" height="20" viewBox="0 0 20 20">
          <circle cx="10" cy="10" r="9.500" fill="#1b6fc0" />
          <path d="M.5 9C1 3 6 .5 10 .5C16 .5 19.500 5 19.500 8.500C19.500 12 16 13 13.500 12.500C15 9 12 6.500 8.500 6.500C5 6.500 1.500 7.500 .5 10z" fill="#37c2a8" />
          <path d="M.5 9C2 5 8 5 10.500 7.500C8 8 7 10 7 12C7 15 9 18 12 19C6 20.500 0 16 .5 9z" fill="#1d9ad8" />
          <path d="M9.500 9C8.500 11 9 14 13 15C16 15.500 18 14.500 19 14C17 12.500 14.500 13.500 13 12.500C13.500 10.500 12 8 9.500 9z" fill="#e8eefa" />
        </svg>
      );
    case 'Cubase':
      return <Logo size={19} />;
    case 'Recorder':
      return <span className="size-[18px] rounded-full border-[3px] border-[#151515] bg-[#f0332c]" />;
    default:
      return <svg width="20" height="17"><rect width="20" height="17" rx="1" fill="#3a3d40" /><path d="M0 0H20V3H0z" fill="#63676a" /><path d="M3 6L7 9L3 12M9 13H15" stroke="#fff" strokeWidth="1.500" fill="none" /></svg>;
  }
}

function Taskbar() {
  const apps = ['Task view', 'Copilot', 'Teams', 'Store', 'Notes', 'McAfee', 'Swoosh', 'Twitter', 'L', 'Explorer', 'Chrome', '6432', 'WhatsApp', 'Edge', 'Cubase', 'Recorder', 'Terminal'];
  return (
    <footer className="flex h-10 shrink-0 items-center border-t border-[#eef1f2] bg-linear-to-r from-[#dad8d6] via-[#d8e2f4] to-[#dcdbda] font-['Open_Sans','Noto_Sans',sans-serif]">
      <button aria-label="Widgets" className="ml-[17px]">
        <svg width="21" height="19"><rect x="1" y="1" width="19" height="17" rx="1" fill="#2a9ae0" stroke="#1b5f93" strokeWidth="1.500" /><path d="M2 2H9V17H2z" fill="#fff" /><path d="M11 10H19V17H11z" fill="#1668ac" /></svg>
      </button>
      <button aria-label="Start" className="ml-[77px]">
        <svg width="20" height="20"><path d="M0 0H9.500V9.500H0zM10.500 0H20V9.500H10.500zM0 10.500H9.500V20H0zM10.500 10.500H20V20H10.500z" fill="#1c93dc" /></svg>
      </button>
      <label className="ml-3 flex h-[26px] w-[182px] items-center gap-2 rounded-full bg-[#f5f4f3] pl-[9px]">
        <Search size={13} color="#333" strokeWidth={2} />
        <input aria-label="Search" placeholder="Search" className="w-full min-w-0 bg-transparent text-[11px] text-[#555] outline-none placeholder:text-[#666]" />
      </label>
      <div className="flex w-[625px]">
        {apps.map((a) => (
          <button key={a} aria-label={a} className={`relative flex h-8 flex-1 items-center justify-center ${a === 'Cubase' ? 'rounded-sm bg-[#f2f1ee]' : ''}`}>
            <AppIcon id={a} />
            {a === 'Cubase' && <i className="absolute bottom-0 h-[3px] w-3 rounded-full bg-[#2272b4]" />}
            {(a === 'Recorder' || a === 'Terminal') && <i className="absolute bottom-0 h-0.5 w-1 rounded-full bg-[#777]" />}
          </button>
        ))}
      </div>
      <div className="ml-auto flex items-center pr-[18px] text-[10px] text-[#222]">
        <button aria-label="Hidden icons"><ChevronUp size={13} /></button>
        <CloudOff className="ml-[14px]" size={14} />
        <Mic className="ml-[12px]" size={14} />
        <span className="ml-[17px] pt-3 leading-none">US</span>
        <Globe className="ml-[18px]" size={13} />
        <Volume2 className="ml-[6px]" size={14} />
        <BatteryMedium className="ml-[6px]" size={15} />
        <time className="ml-[12px] pt-3 leading-none">2024/10/30</time>
        <Bell className="ml-[6px]" size={12} fill="#1b5f93" color="#1b5f93" />
      </div>
    </footer>
  );
}

/* ---------- page ---------- */

export default function App() {
  return (
    <div className="relative flex h-screen flex-col overflow-hidden bg-[#22333f] font-['Liberation_Sans',Arial,sans-serif]">
      <Chrome />
      <Toolbar />
      <main className="flex min-h-0 flex-1 border-b border-[#5f6d77] pr-0.5 pl-1">
        <Inspector />
        <TrackList />
        <Timeline />
        <RightRail />
      </main>
      <Taskbar />
      <p className="pointer-events-none absolute top-[290px] left-[280px] font-['Open_Sans','Noto_Sans',sans-serif] text-[89px] leading-[120px] font-medium whitespace-nowrap text-[#fb0007] filter-[drop-shadow(14px_14px_0_rgb(40_40_40/0.45))] [-webkit-text-stroke:12px_#0a80ff] [paint-order:stroke_fill]">
        Please Subscribe
      </p>
      <div className="pointer-events-none absolute top-[599px] right-[14px] text-right font-['Open_Sans','Noto_Sans',sans-serif] font-medium whitespace-nowrap text-[#dc1626] filter-[drop-shadow(5px_5px_0_rgb(140_155_110/0.7))] [-webkit-text-stroke:5px_#1f74ae] [paint-order:stroke_fill]">
        <p className="text-[39px] leading-[54px]">LOYED MATIQ</p>
        <p className="text-[38px] leading-[54px]">0827165823</p>
      </div>
    </div>
  );
}
